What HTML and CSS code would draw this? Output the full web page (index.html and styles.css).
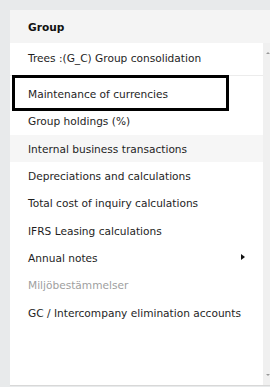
FILE: index.html
```html
<!DOCTYPE html>
<html>
<head>
<meta charset="utf-8">
<link rel="stylesheet" href="styles.css">
</head>
<body>
<div class="panel">
  <div class="header">Group</div>
  <div class="body">
    <div class="main">
      <div class="trees">Trees :(G_C) Group consolidation</div>
      <ul class="menu">
        <li class="item focused">Maintenance of currencies</li>
        <li class="item">Group holdings (%)</li>
        <li class="item hover">Internal business transactions</li>
        <li class="item">Depreciations and calculations</li>
        <li class="item">Total cost of inquiry calculations</li>
        <li class="item">IFRS Leasing calculations</li>
        <li class="item sub">Annual notes<span class="caret"></span></li>
        <li class="item disabled">Miljöbestämmelser</li>
        <li class="item">GC / Intercompany elimination accounts</li>
      </ul>
    </div>
    <div class="scroll">
      <span class="arrow up"></span>
      <span class="arrow down"></span>
    </div>
  </div>
</div>
</body>
</html>
```
FILE: styles.css
```css
html, body {
  margin: 0;
  padding: 0;
  background: #e8eaeb;
}
body {
  padding: 10px 0 0 10px;
  font-family: "DejaVu Sans", Verdana, sans-serif;
  font-size: 10.6px;
  color: #1e1e1e;
}
.panel {
  width: 260px;
  height: 375px;
  background: #fff;
  border-bottom: 1px solid #d8d8d8;
  display: flex;
  flex-direction: column;
}
.header {
  height: 33px;
  background: #f4f4f4;
  font-weight: bold;
  color: #111;
  padding-left: 18px;
  display: flex;
  align-items: center;
}
.body {
  flex: 1;
  display: flex;
}
.main {
  width: 253px;
}
.scroll {
  width: 7px;
  background: #f0f0f0;
  position: relative;
}
.arrow {
  position: absolute;
  right: 0;
  width: 0;
  height: 0;
  border-left: 2px solid transparent;
  border-right: 2px solid transparent;
}
.arrow.up {
  top: 9px;
  border-bottom: 2px solid #999;
}
.arrow.down {
  bottom: 9px;
  border-top: 2px solid #999;
}
.trees {
  height: 29px;
  padding-bottom: 3px;
  border-bottom: 1px solid #ececec;
  padding-left: 18px;
  display: flex;
  align-items: center;
}
.menu {
  list-style: none;
  margin: 0;
  padding: 4.3px 0 0 0;
}
.item {
  height: 27.33px;
  padding-left: 18px;
  display: flex;
  align-items: center;
  position: relative;
}
.item.hover {
  background: #f6f6f6;
}
.item.disabled {
  color: #a0a0a0;
}
.item.focused::after {
  content: "";
  position: absolute;
  left: 2px;
  right: 34px;
  top: -5.3px;
  bottom: -3.3px;
  border: 3px solid #000;
}
.caret {
  position: absolute;
  left: 231px;
  top: 10px;
  width: 0;
  height: 0;
  border-top: 3.5px solid transparent;
  border-bottom: 3.5px solid transparent;
  border-left: 4px solid #111;
}
```
